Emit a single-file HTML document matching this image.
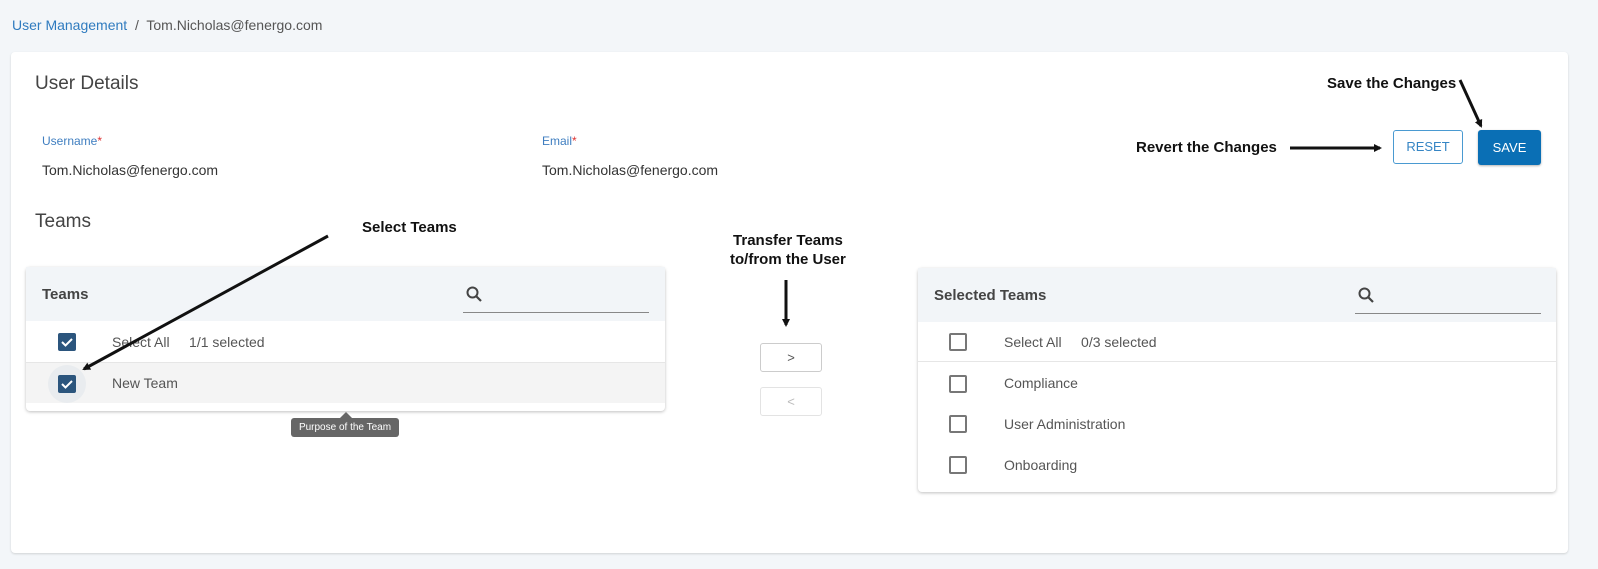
<!DOCTYPE html>
<html><head><style>
*{margin:0;padding:0;box-sizing:border-box}
body{width:1598px;height:569px;background:#f3f6f9;font-family:"Liberation Sans",sans-serif;position:relative;overflow:hidden;color:#444}
.a{position:absolute}
.card{left:11px;top:52px;width:1557px;height:501px;background:#fff;border-radius:4px;box-shadow:0 1px 2px rgba(0,0,0,.15)}
.panel{background:#fff;border-radius:4px;box-shadow:0 1px 3px rgba(0,0,0,.25)}
.ph{background:#f2f5f8;height:54px}
.cb{width:18px;height:18px;border-radius:2px;background:#2b557d;position:absolute}
.cb svg{position:absolute;left:2px;top:2px}
.ub{width:18px;height:18px;border:2px solid #777;border-radius:2px;position:absolute}
.ann{font-weight:bold;color:#111;font-size:15px}
.t14{font-size:14px;color:#555}
</style></head><body>
<div class="a" style="left:12px;top:17px;font-size:14px"><span style="color:#2f7bbf">User Management</span> <span style="color:#555">&nbsp;/&nbsp; Tom.Nicholas@fenergo.com</span></div>
<div class="a card"></div>
<div class="a" style="left:35px;top:73px;font-size:19px;color:#444">User Details</div>
<div class="a" style="left:42px;top:134px;font-size:12px;color:#3f7ec0">Username<span style="color:#d33">*</span></div>
<div class="a" style="left:42px;top:162px;font-size:14px;color:#333">Tom.Nicholas@fenergo.com</div>
<div class="a" style="left:542px;top:134px;font-size:12px;color:#3f7ec0">Email<span style="color:#d33">*</span></div>
<div class="a" style="left:542px;top:162px;font-size:14px;color:#333">Tom.Nicholas@fenergo.com</div>
<div class="a" style="left:1393px;top:130px;width:70px;height:34px;border:1px solid #4a9ad1;border-radius:3px;color:#3585c4;font-size:13px;text-align:center;line-height:32px">RESET</div>
<div class="a" style="left:1478px;top:130px;width:63px;height:35px;background:#0a6fb5;border-radius:3px;color:#fff;font-size:13px;text-align:center;line-height:35px;box-shadow:0 1px 2px rgba(0,0,0,.3)">SAVE</div>
<div class="a ann" style="left:1327px;top:75px">Save the Changes</div>
<div class="a ann" style="left:1136px;top:139px">Revert the Changes</div>
<div class="a" style="left:35px;top:211px;font-size:19px;color:#444">Teams</div>
<div class="a ann" style="left:362px;top:219px">Select Teams</div>
<div class="a ann" style="left:730px;top:231px;text-align:center;line-height:19px">Transfer Teams<br>to/from the User</div>

<div class="a panel" style="left:26px;top:267px;width:639px;height:144px">
 <div class="ph"></div>
 <div style="position:absolute;left:0;top:95px;width:639px;height:41px;background:#f4f4f4;border-top:1px solid #e6e6e6"></div>
</div>
<div class="a" style="left:42px;top:286px;font-size:15px;font-weight:bold;color:#444">Teams</div>
<div class="a" style="left:463px;top:312px;width:186px;border-bottom:1px solid #888"></div>
<svg class="a" style="left:465px;top:285px" width="20" height="20" viewBox="0 0 20 20"><circle cx="7.5" cy="7.5" r="5" fill="none" stroke="#444" stroke-width="2"/><path d="M11 11l5 5" stroke="#444" stroke-width="2.2"/></svg>
<div class="a" style="left:48px;top:365px;width:38px;height:38px;border-radius:50%;background:#e9ecef"></div>
<div class="cb" style="left:58px;top:333px"><svg width="14" height="14"><path d="M2 7l3.5 3.5L12 4" fill="none" stroke="#fff" stroke-width="2"/></svg></div>
<div class="cb" style="left:58px;top:375px"><svg width="14" height="14"><path d="M2 7l3.5 3.5L12 4" fill="none" stroke="#fff" stroke-width="2"/></svg></div>
<div class="a t14" style="left:112px;top:334px">Select All &nbsp;&nbsp;&nbsp;&nbsp;1/1 selected</div>
<div class="a t14" style="left:112px;top:375px">New Team</div>
<div class="a" style="left:291px;top:418px;width:108px;height:19px;background:#666;border-radius:3px;color:#fff;font-size:10px;text-align:center;line-height:19px">Purpose of the Team</div>
<div class="a" style="left:340px;top:412px;width:0;height:0;border:6px solid transparent;border-bottom-color:#666;border-top:0"></div>

<div class="a" style="left:760px;top:343px;width:62px;height:29px;border:1px solid #ccc;border-radius:3px;text-align:center;line-height:27px;font-size:13px;color:#555">&gt;</div>
<div class="a" style="left:760px;top:387px;width:62px;height:29px;border:1px solid #e3e3e3;border-radius:3px;text-align:center;line-height:27px;font-size:13px;color:#bbb">&lt;</div>

<div class="a panel" style="left:918px;top:268px;width:638px;height:224px">
 <div class="ph"></div>
 <div style="position:absolute;left:0;top:93px;width:638px;border-top:1px solid #e6e6e6"></div>
</div>
<div class="a" style="left:934px;top:287px;font-size:15px;font-weight:bold;color:#444">Selected Teams</div>
<div class="a" style="left:1355px;top:313px;width:186px;border-bottom:1px solid #888"></div>
<svg class="a" style="left:1357px;top:286px" width="20" height="20" viewBox="0 0 20 20"><circle cx="7.5" cy="7.5" r="5" fill="none" stroke="#444" stroke-width="2"/><path d="M11 11l5 5" stroke="#444" stroke-width="2.2"/></svg>
<div class="ub" style="left:949px;top:333px"></div>
<div class="ub" style="left:949px;top:375px"></div>
<div class="ub" style="left:949px;top:415px"></div>
<div class="ub" style="left:949px;top:456px"></div>
<div class="a t14" style="left:1004px;top:334px">Select All &nbsp;&nbsp;&nbsp;&nbsp;0/3 selected</div>
<div class="a t14" style="left:1004px;top:375px">Compliance</div>
<div class="a t14" style="left:1004px;top:416px">User Administration</div>
<div class="a t14" style="left:1004px;top:457px">Onboarding</div>

<svg class="a" style="left:0;top:0" width="1598" height="569">
<defs><marker id="m" markerWidth="8" markerHeight="8" refX="6" refY="4" orient="auto" markerUnits="userSpaceOnUse"><path d="M0 0L8 4L0 8z" fill="#111"/></marker></defs>
<g stroke="#111" stroke-width="3" fill="none">
<line x1="328" y1="236" x2="84" y2="369" marker-end="url(#m)"/>
<line x1="786" y1="280" x2="786" y2="325" marker-end="url(#m)"/>
<line x1="1290" y1="148" x2="1380" y2="148" marker-end="url(#m)"/>
<line x1="1460" y1="80" x2="1481" y2="126" marker-end="url(#m)"/>
</g></svg>
</body></html>
